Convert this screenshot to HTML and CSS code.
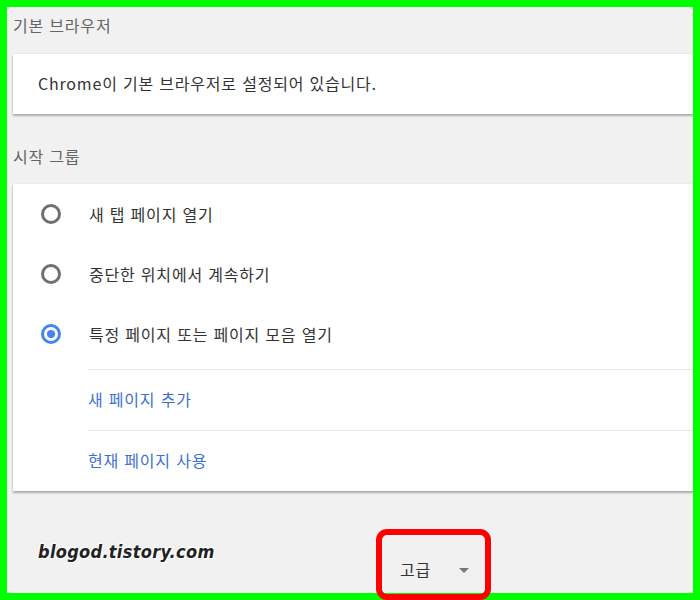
FILE: index.html
```html
<!DOCTYPE html>
<html lang="ko">
<head>
  <meta charset="UTF-8" />
  <meta name="viewport" content="width=device-width, initial-scale=1.0" />
  <title>설정 - 시작 그룹</title>
  <link rel="stylesheet" href="styles.css">
</head>
<body>
  <div class="frame">
    <div class="page">

      <!-- 기본 브라우저 -->
      <div class="section-title first">기본 브라우저</div>
      <div class="card">
        <div class="card-text">Chrome이 기본 브라우저로 설정되어 있습니다.</div>
      </div>

      <!-- 시작 그룹 -->
      <div class="section-title">시작 그룹</div>
      <div class="card">
        <div class="radio-list">
          <div class="radio-row">
            <span class="radio"></span>
            <span class="label">새 탭 페이지 열기</span>
          </div>
          <div class="radio-row">
            <span class="radio"></span>
            <span class="label">중단한 위치에서 계속하기</span>
          </div>
          <div class="radio-row">
            <span class="radio checked"></span>
            <span class="label">특정 페이지 또는 페이지 모음 열기</span>
          </div>
        </div>
        <div class="link-row">새 페이지 추가</div>
        <div class="link-row last">현재 페이지 사용</div>
      </div>

      <!-- 고급 -->
      <div class="advanced">
        <span class="advanced-label">고급</span>
        <span class="arrow"></span>
      </div>

      <div class="watermark">blogod.tistory.com</div>
    </div>

    <div class="highlight"></div>
  </div>
</body>
</html>
```

FILE: styles.css
```css
body {
  margin: 0;
  padding: 0;
  background: #00ff00;
  font-family: "Noto Sans CJK KR", "Noto Sans", sans-serif;
  letter-spacing: 0.8px;
}

.frame {
  position: relative;
  width: 700px;
  height: 600px;
  padding: 7px;
  box-sizing: border-box;
}

.page {
  position: relative;
  height: 586px;
  padding-left: 6px;
  background: #f1f1f1;
  overflow: hidden;
}

/* 📌 섹션 제목 */
.section-title {
  padding: 30px 0 16px;
  font-size: 16px;
  line-height: 24px;
  color: #646464;
}

.section-title.first {
  padding: 6px 0 17px;
}

/* 📌 카드 */
.card {
  margin-right: -12px;
  background: #fff;
  box-shadow: 0 2px 2px rgba(0, 0, 0, 0.28), 0 0 2px rgba(0, 0, 0, 0.08);
}

.card-text {
  height: 60px;
  padding-left: 25px;
  padding-bottom: 3px;
  box-sizing: border-box;
  display: flex;
  align-items: center;
  font-size: 16px;
  color: #333;
}

.radio-list {
  padding-bottom: 5px;
}

.radio-row {
  height: 60px;
  padding-left: 28px;
  display: flex;
  align-items: center;
  gap: 28px;
  font-size: 16px;
  color: #333;
}

.radio-row .label {
  padding-bottom: 1px;
}

.radio {
  width: 20px;
  height: 20px;
  border: 3px solid #6f6f6f;
  border-radius: 50%;
  box-sizing: border-box;
  display: flex;
  align-items: center;
  justify-content: center;
  flex-shrink: 0;
}

.radio.checked {
  border-color: #4285f4;
}

.radio.checked::after {
  content: "";
  width: 8px;
  height: 8px;
  border-radius: 50%;
  background: #4285f4;
}

.link-row {
  height: 61px;
  margin-left: 75px;
  padding-bottom: 3px;
  box-sizing: border-box;
  border-top: 1px solid #e6e6e6;
  display: flex;
  align-items: center;
  font-size: 16px;
  color: #3f6fd3;
}

.link-row.last {
  height: 61px;
}

/* 📌 고급 */
.advanced {
  padding: 66px 0 0 387px;
  display: flex;
  align-items: center;
  gap: 28px;
  line-height: 24px;
}

.advanced-label {
  font-size: 16px;
  color: #333;
}

.arrow {
  width: 0;
  height: 0;
  margin-top: 2px;
  border-left: 5px solid transparent;
  border-right: 5px solid transparent;
  border-top: 5px solid #777;
}

.watermark {
  position: absolute;
  left: 31px;
  top: 534px;
  font-family: "DejaVu Sans Condensed", "DejaVu Sans", sans-serif;
  font-style: oblique;
  font-weight: bold;
  font-size: 18px;
  letter-spacing: 0.3px;
  color: #222;
  text-shadow: 0 0 2px #fff, 0 0 3px #fff, 1px 1px 0 #fff, -1px -1px 0 #fff;
}

/* 📌 빨간 강조 박스 */
.highlight {
  position: absolute;
  left: 376px;
  top: 529px;
  width: 115px;
  height: 71px;
  border: 6px solid #ff0000;
  border-radius: 11px;
  box-sizing: border-box;
}
```
